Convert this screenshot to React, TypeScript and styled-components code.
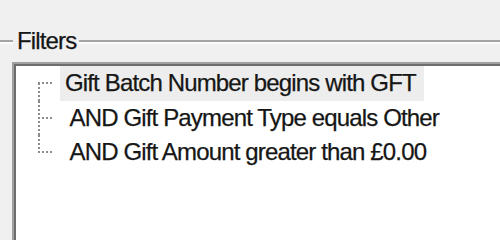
import styled, { createGlobalStyle } from "styled-components";

interface FilterRule {
  text: string;
}

const rules: FilterRule[] = [
  { text: "Gift Batch Number begins with GFT" },
  { text: " AND Gift Payment Type equals Other" },
  { text: " AND Gift Amount greater than £0.00" },
];

type Branch = "first" | "middle" | "last";

const branchOf = (index: number, count: number): Branch =>
  index === 0 ? "first" : index === count - 1 ? "last" : "middle";

export default function App() {
  return (
    <>
      <GlobalStyle />
      <Page>
        <GroupHeader>
          <Rule $short />
          <GroupTitle>Filters</GroupTitle>
          <Rule />
        </GroupHeader>
        <TreeBox>
          {rules.map((rule, index) => (
            <TreeRow key={index}>
              <Connector $branch={branchOf(index, rules.length)} />
              <NodeLabel $selected={index === 0}>{rule.text}</NodeLabel>
            </TreeRow>
          ))}
        </TreeBox>
      </Page>
    </>
  );
}

const GlobalStyle = createGlobalStyle`
  html, body {
    margin: 0;
    padding: 0;
    background: #f0f0f0;
    overflow: hidden;
  }
`;

const Page = styled.div`
  display: flex;
  flex-direction: column;
  width: 100vw;
  height: 100vh;
  min-height: 203px;
  overflow: hidden;
  padding-top: 27px;
  box-sizing: border-box;
  font-family: "Liberation Sans", Arial, sans-serif;
  font-size: 24px;
  letter-spacing: -0.85px;
  color: #161616;
  -webkit-text-stroke: 0.25px #161616;
`;

const GroupHeader = styled.div`
  display: flex;
  flex: 0 0 auto;
  align-items: center;
  height: 28px;
`;

const Rule = styled.div<{ $short?: boolean }>`
  flex: ${(p) => (p.$short ? "0 0 13px" : "1")};
  height: 2px;
  margin-top: 1px;
  background: #a4a4a4;
  border-bottom: 2px solid #fafafa;
`;

const GroupTitle = styled.span`
  padding: 0 3px 0 4px;
  line-height: 28px;
  white-space: nowrap;
`;

const TreeBox = styled.div`
  flex: 1 0 auto;
  margin: 7px -40px -40px 12px;
  background: #ffffff;
  border-top: 2px solid #a0a0a0;
  border-left: 2px solid #a0a0a0;
  box-shadow: inset 2px 2px 0 #6d6d6d;
  padding: 2px 0 0 2px;
`;

const TreeRow = styled.div`
  display: flex;
  align-items: stretch;
  height: 34.5px;
`;

const dots = "#8c8c8c";

const Connector = styled.div<{ $branch: Branch }>`
  position: relative;
  flex: 0 0 44px;

  &::before {
    content: "";
    position: absolute;
    left: 22px;
    width: 2px;
    top: ${(p) => (p.$branch === "first" ? "50%" : "0")};
    bottom: ${(p) => (p.$branch === "last" ? "50%" : "0")};
    background: repeating-linear-gradient(
      to bottom,
      ${dots} 0 2px,
      transparent 2px 4px
    );
  }

  &::after {
    content: "";
    position: absolute;
    left: 22px;
    width: 15px;
    top: calc(50% - 1px);
    height: 2px;
    background: repeating-linear-gradient(
      to right,
      ${dots} 0 2px,
      transparent 2px 4px
    );
  }
`;

const NodeLabel = styled.span<{ $selected?: boolean }>`
  padding: 0 8px 0 5px;
  line-height: 34.5px;
  white-space: pre;
  background: ${(p) => (p.$selected ? "#ededed" : "transparent")};
`;
